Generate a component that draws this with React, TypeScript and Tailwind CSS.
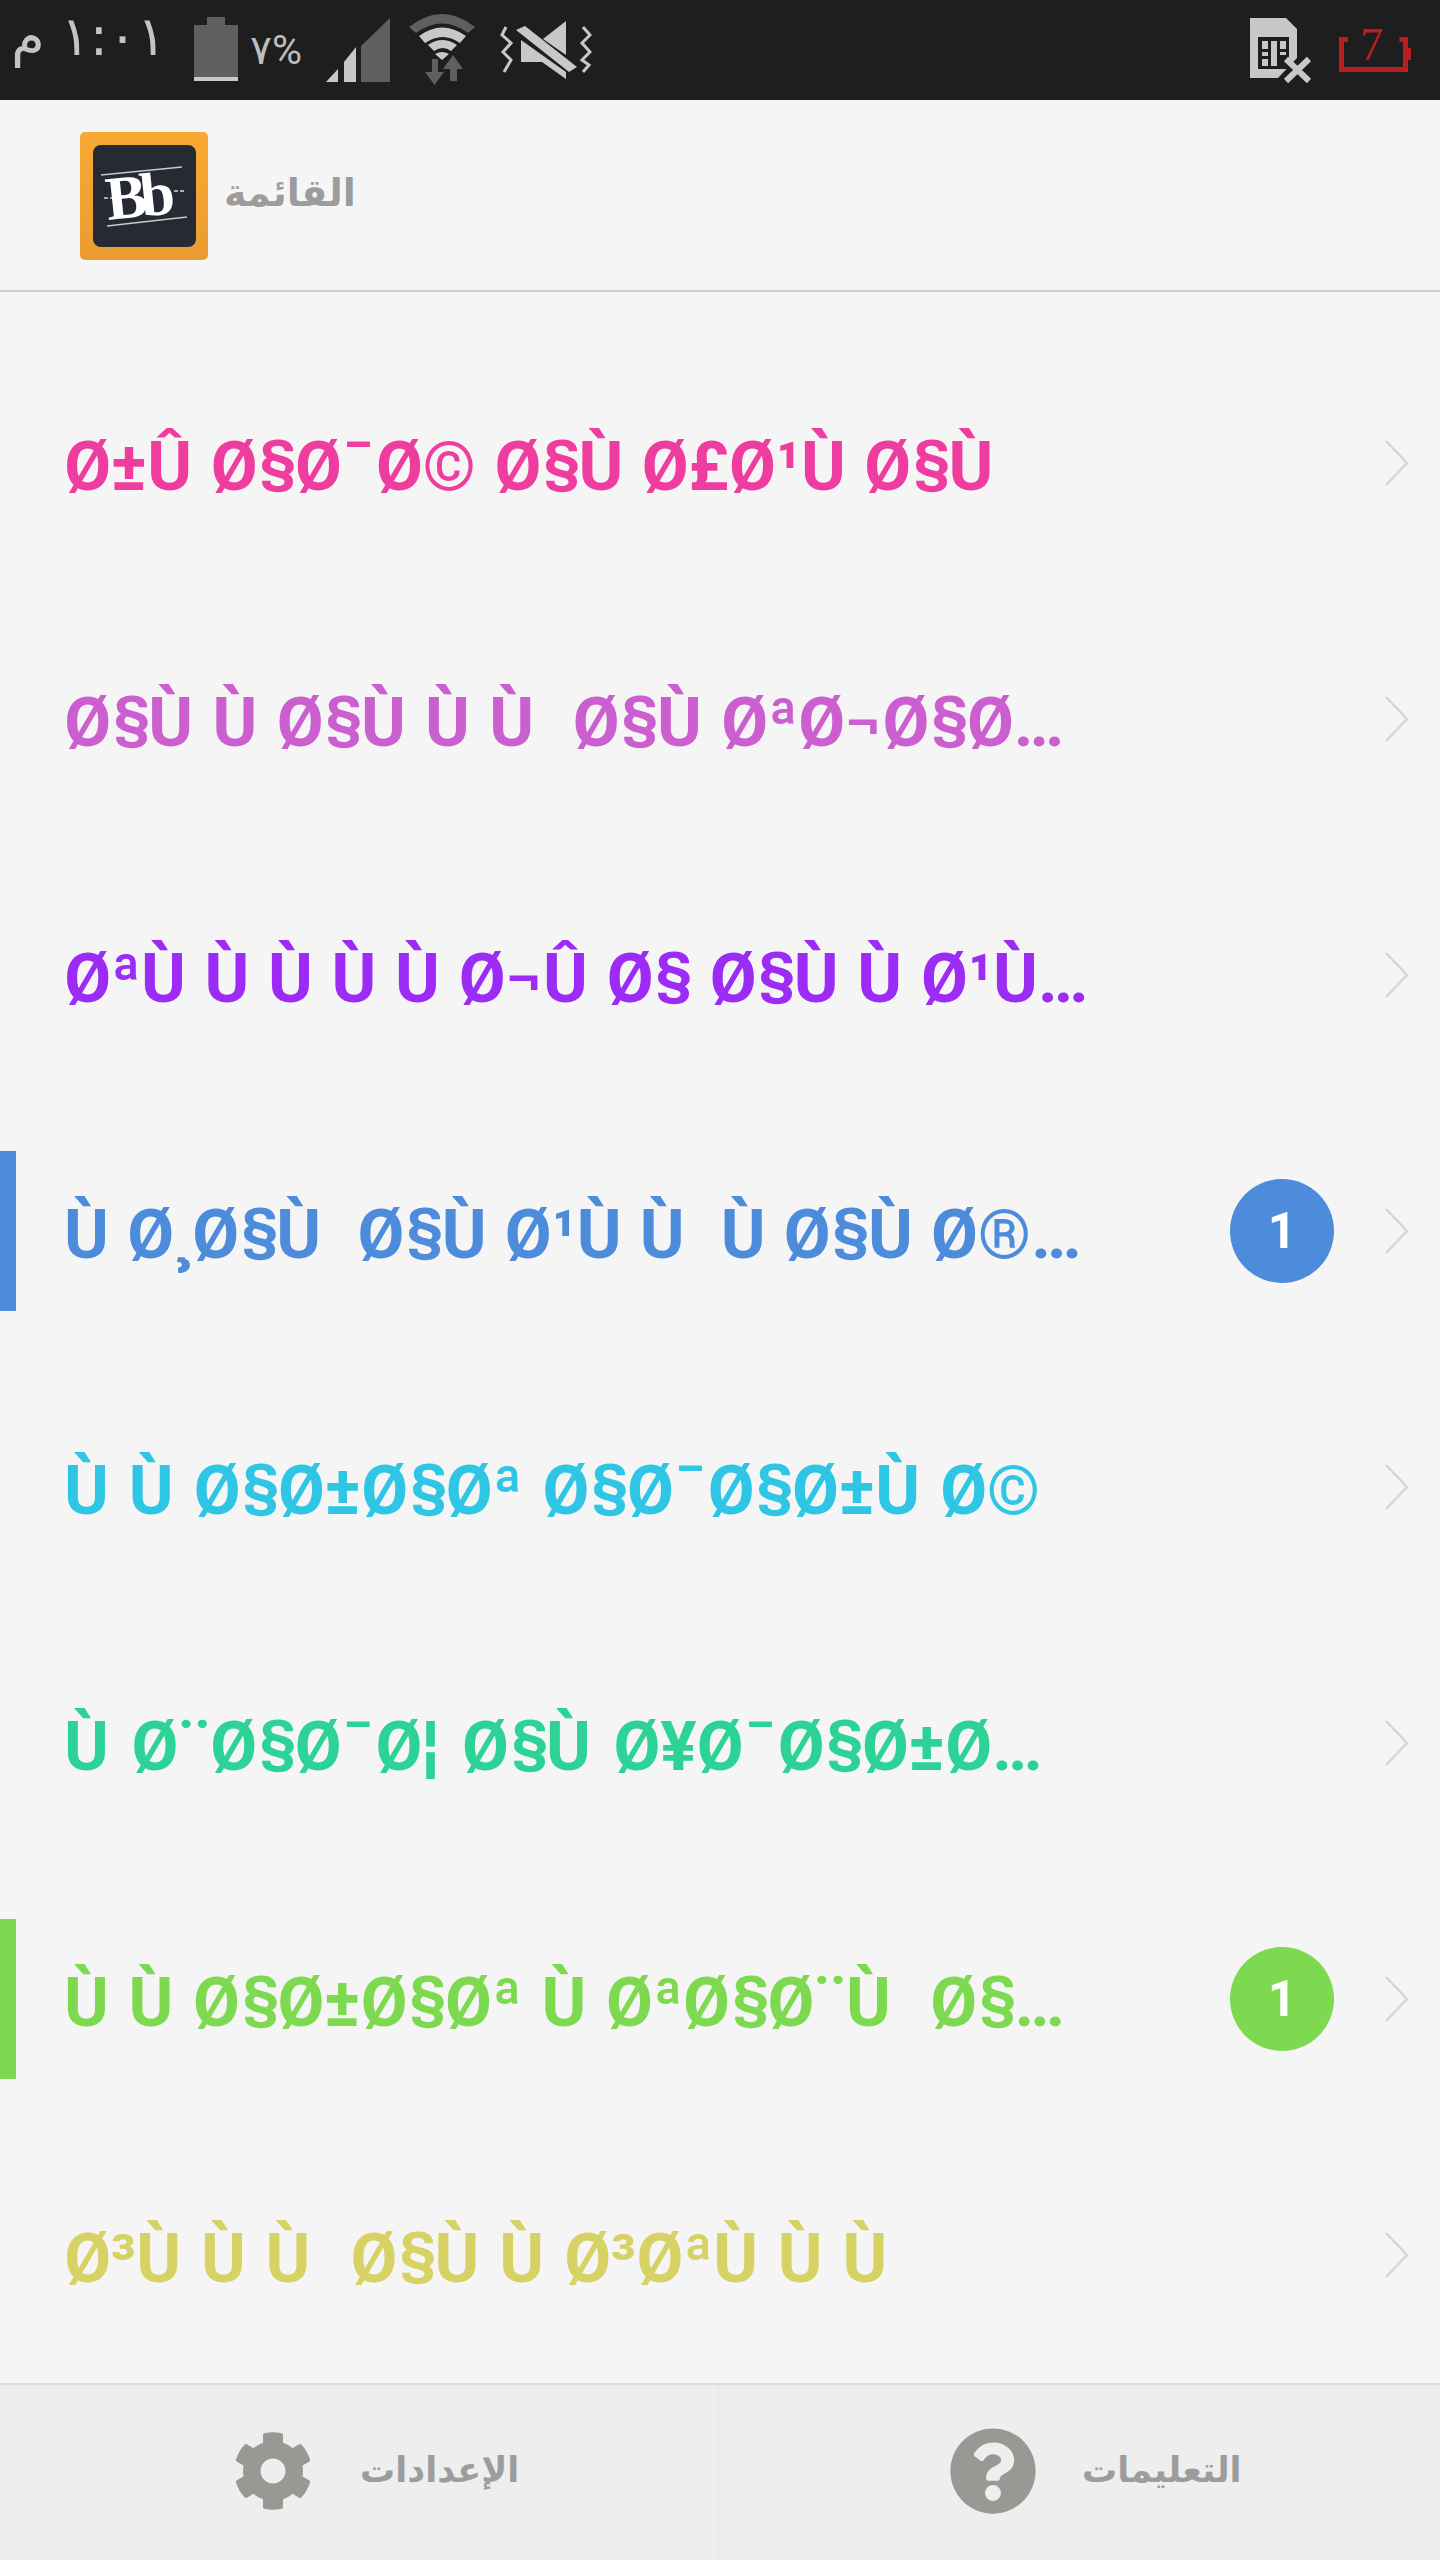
import { FaCog, FaQuestionCircle } from "react-icons/fa";

interface MenuItem {
  title: string;
  text: string;
  bg: string;
  spacing: string;
  badge?: boolean;
}

const items: MenuItem[] = [
  { title: "Ø±Û Ø§Ø¯Ø© Ø§Ù Ø£Ø¹Ù Ø§Ù", text: "text-[#ee3d9f]", bg: "", spacing: "[word-spacing:1.4px]" },
  { title: "Ø§Ù Ù Ø§Ù Ù Ù  Ø§Ù ØªØ¬Ø§Ø…", text: "text-[#cb5fd0]", bg: "", spacing: "[word-spacing:2.4px]" },
  { title: "ØªÙ Ù Ù Ù Ù Ø¬Û Ø§ Ø§Ù Ù Ø¹Ù…", text: "text-[#9b2bf5]", bg: "", spacing: "[word-spacing:1.8px]" },
  { title: "Ù Ø¸Ø§Ù  Ø§Ù Ø¹Ù Ù  Ù Ø§Ù Ø®…", text: "text-[#4d8bdb]", bg: "bg-[#4d8bdb]", spacing: "[word-spacing:1.2px]", badge: true },
  { title: "Ù Ù Ø§Ø±Ø§Øª Ø§Ø¯Ø§Ø±Ù Ø©", text: "text-[#2fc5e5]", bg: "", spacing: "[word-spacing:3px]" },
  { title: "Ù Ø¨Ø§Ø¯Ø¦ Ø§Ù Ø¥Ø¯Ø§Ø±Ø…", text: "text-[#2dd296]", bg: "", spacing: "[word-spacing:5.6px]" },
  { title: "Ù Ù Ø§Ø±Ø§Øª Ù ØªØ§Ø¨Ù  Ø§…", text: "text-[#7dd94f]", bg: "bg-[#7dd94f]", spacing: "[word-spacing:2.7px]", badge: true },
  { title: "Ø³Ù Ù Ù  Ø§Ù Ù Ø³ØªÙ Ù Ù", text: "text-[#d6d264]", bg: "", spacing: "[word-spacing:3px]" },
];

// the section sign of the installed Roboto hangs below the baseline, the one in the picture doesn't
function Title({ value }: { value: string }) {
  const parts = value.split("§");
  return (
    <>
      {parts.map((part, i) => (
        <span key={i}>
          {part}
          {i < parts.length - 1 && (
            <span className="inline-block w-[37.5px] origin-[50%_6px] scale-x-[0.88] scale-y-[0.82] text-center">
              §
            </span>
          )}
        </span>
      ))}
    </>
  );
}

function StatusLeft() {
  return (
    <div className="flex h-full items-start">
      <div
        dir="rtl"
        className="ml-[16px] w-[150px] whitespace-pre pt-[2px] text-left font-['DejaVu_Sans',sans-serif] text-[54px] leading-[70px] text-[#c4c4c4] [word-spacing:-1px]"
      >
        ١:٠١ م
      </div>
      <svg viewBox="194 0 44 100" className="ml-[28px] h-[100px] w-[44px]">
        <path d="M207 17h18v8h13v52h-44v-52h13z" fill="#5f5f5f" />
        <rect x="194" y="77" width="44" height="4" fill="#c8c8c8" />
      </svg>
      <div className="ml-[12px] w-[60px] pt-[30px] font-['Roboto',sans-serif] text-[41px] leading-[40px] text-[#bdbdbd]">
        ٧%
      </div>
      <svg viewBox="326 0 64 100" className="ml-[16px] h-[100px] w-[64px]">
        <path d="M326 82l12-13v13z" fill="#c8c8c8" />
        <path d="M344 82v-20l12-15v35z" fill="#c8c8c8" />
        <path d="M361 82v-36l29-28v64z" fill="#5f5f5f" />
      </svg>
      <svg viewBox="409 0 66 100" className="ml-[19px] h-[100px] w-[66px]">
        <path d="M409 27q33-26 66 0l-7 6q-26-19-52 0z" fill="#5f5f5f" />
        <path d="M419 36q23-17 47 0l-6 7q-17-12-35 0z" fill="#c8c8c8" />
        <path d="M428 45q14-10 29 0l-6 6q-8-6-17 0z" fill="#c8c8c8" />
        <path d="M435 54q7-4 14 0l-7 6z" fill="#c8c8c8" />
        <path d="M432 59h6v13h6l-9.500 13l-9.500-13h7z" fill="#5f5f5f" />
        <path d="M453 55l10 14h-6v12h-7v-12h-7z" fill="#5f5f5f" />
      </svg>
      <svg viewBox="500 0 92 100" className="ml-[25px] h-[100px] w-[92px]">
        <path d="M543 39l23-18v34z" fill="#c8c8c8" />
        <path d="M521 40v22h21l24 17v-7z" fill="#c8c8c8" />
        <path d="M516 30l9-4l52 41l-8 5z" fill="#c8c8c8" />
        <path
          d="M506 27l-4 8l9 8l-8 9l8 8l-7 12"
          fill="none"
          stroke="#c8c8c8"
          strokeWidth="3"
        />
        <path
          d="M583 27l7 8l-8 8l8 9l-8 8l7 5l-6 7"
          fill="none"
          stroke="#c8c8c8"
          strokeWidth="3"
        />
      </svg>
    </div>
  );
}

function StatusRight() {
  return (
    <div className="flex h-full items-start">
      <svg viewBox="1250 0 62 100" className="h-[100px] w-[62px]">
        <path d="M1250 18h36l11 11v29l-19 20h-28z" fill="#c8c8c8" />
        <rect x="1258" y="37" width="31" height="32" fill="#1e1e1e" />
        <path d="M1262 41h6v8h-6zM1262 52h6v4h-6zM1262 59h6v7h-6zM1271 41h6v25h-6zM1280 41h6v8h-6zM1280 52h6v3h-6z" fill="#c8c8c8" />
        <path d="M1286 59l23 22M1309 59l-23 22" stroke="#c8c8c8" strokeWidth="6" />
      </svg>
      <svg viewBox="1339 0 72 100" className="ml-[27px] mr-[29px] h-[100px] w-[72px]">
        <path
          d="M1348 39.500h-6.500v30h64v-30h-6"
          fill="none"
          stroke="#bb1e1e"
          strokeWidth="5"
        />
        <rect x="1407" y="48" width="4" height="12" fill="#bb1e1e" />
        <text
          x="1360"
          y="60"
          fill="#bb1e1e"
          fontFamily="'Liberation Serif', serif"
          fontSize="46"
        >
          7
        </text>
      </svg>
    </div>
  );
}

function Logo() {
  return (
    <div className="flex h-[128px] w-[128px] items-center justify-center rounded-[5px] bg-gradient-to-b from-[#f7a933] to-[#eb9c31]">
      <div className="h-[102px] w-[103px] overflow-hidden rounded-[8px] bg-[#262a33]">
        <svg viewBox="93 145 103 102" className="h-full w-full">
          <path d="M101 175l81-8M107 226l80-9" stroke="#c9c9c9" strokeWidth="1.500" />
          <path d="M104 198h10M174 191h11" stroke="#d8d8d8" strokeWidth="1.500" strokeDasharray="4 2" />
          <text
            x="108"
            y="220"
            fill="#ffffff"
            fontFamily="'Liberation Serif', serif"
            fontSize="62"
            fontWeight="bold"
            transform="rotate(-6 108 220)"
            letterSpacing="-7"
          >
            Bb
          </text>
        </svg>
      </div>
    </div>
  );
}

function Row({ item }: { item: MenuItem }) {
  return (
    <div className="flex h-[160px] items-center">
      <div className={`h-full w-[16px] ${item.bg}`} />
      <div
        className={`ml-[48px] flex-1 whitespace-pre pt-[7px] font-['Roboto',sans-serif] text-[68px] leading-[80px] font-bold ${item.spacing} ${item.text}`}
      >
        <Title value={item.title} />
      </div>
      {item.badge && (
        <div className={`flex h-[104px] w-[104px] items-center justify-center rounded-full font-['Roboto',sans-serif] text-[50px] font-bold text-white ${item.bg}`}>
          1
        </div>
      )}
      <svg viewBox="0 0 26 48" className="ml-[50px] mr-[30px] h-[48px] w-[26px]">
        <path d="M2 2l21 22l-21 22" fill="none" stroke="#d6d6d6" strokeWidth="2.500" />
      </svg>
    </div>
  );
}

export default function App() {
  return (
    <div className="flex h-[2560px] w-[1440px] flex-col bg-[#f5f5f5]">
      <div className="flex h-[100px] items-start justify-between bg-[#1e1e1e]">
        <StatusLeft />
        <StatusRight />
      </div>

      <div className="flex h-[192px] items-center border-b-2 border-[#cfcfcf] pt-[2px] pl-[80px]">
        <Logo />
        <span className="mb-[6px] ml-[16px] font-['DejaVu_Sans',sans-serif] text-[38px] font-bold text-[#9c9c9c]">
          القائمة
        </span>
      </div>

      <div className="flex flex-1 flex-col gap-[96px] pt-[91px]">
        {items.map((item) => (
          <Row key={item.title} item={item} />
        ))}
      </div>

      <div className="flex h-[177px] border-t-2 border-[#dcdcdc] bg-[#eeeeee]">
        <div className="flex w-[719px] items-center gap-[47px] border-r border-[#e6e6e6] pb-[4px] pl-[233px]">
          <FaCog className="h-[80px] w-[80px] text-[#999895]" />
          <span className="font-['DejaVu_Sans',sans-serif] text-[35px] font-bold text-[#9c9c9c]">
            الإعدادات
          </span>
        </div>
        <div className="flex flex-1 items-center gap-[45px] pb-[4px] pl-[230px]">
          <FaQuestionCircle className="h-[88px] w-[88px] text-[#999895]" />
          <span className="font-['DejaVu_Sans',sans-serif] text-[35px] font-bold text-[#9c9c9c]">
            التعليمات
          </span>
        </div>
      </div>
    </div>
  );
}
